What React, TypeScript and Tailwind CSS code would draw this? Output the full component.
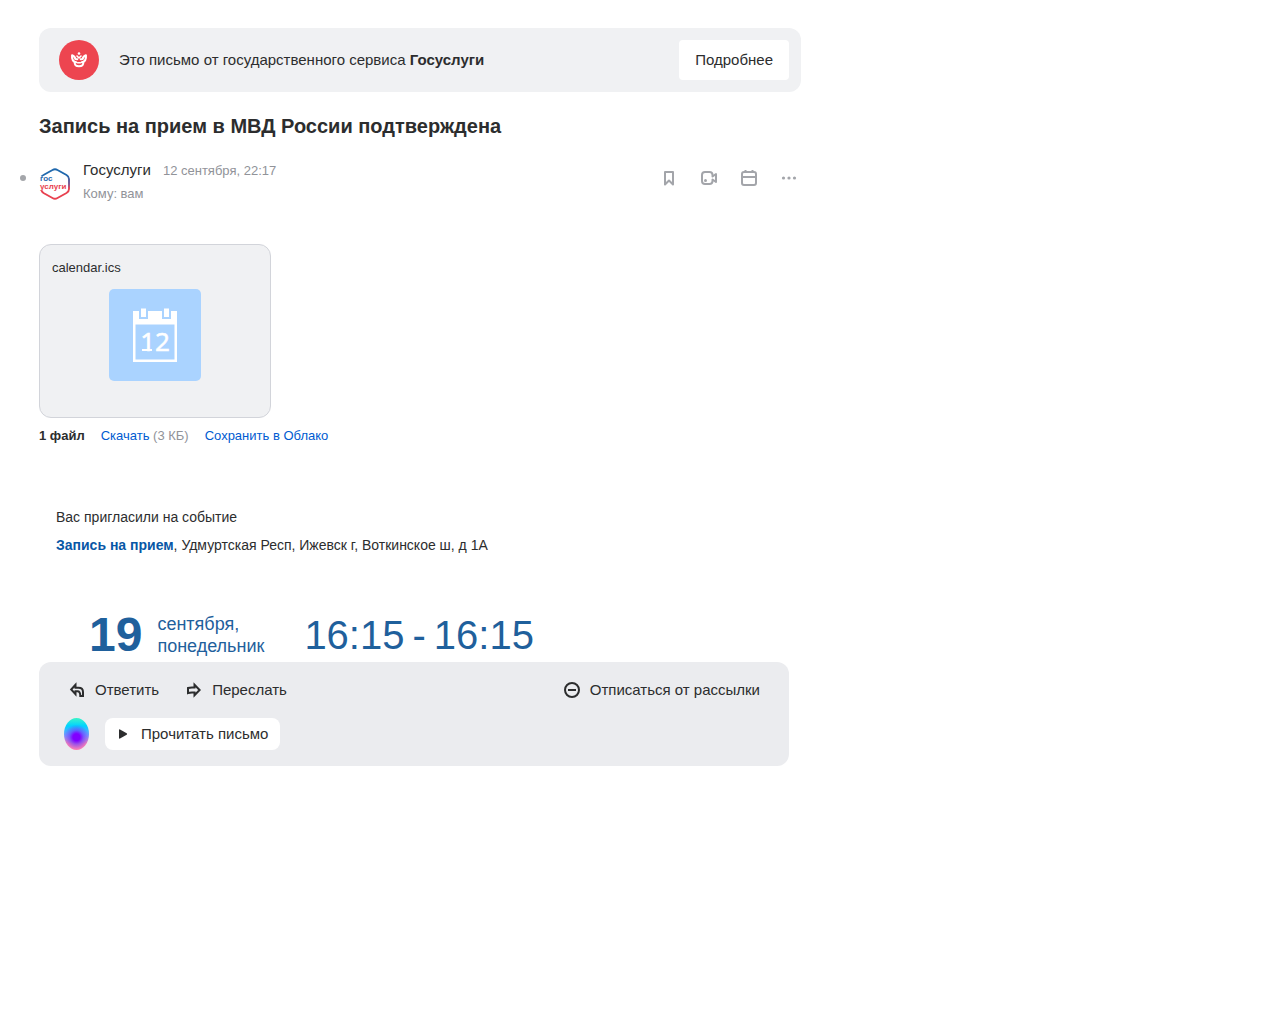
import type { ReactNode } from "react";

function GerbIcon() {
  return (
    <svg viewBox="0 0 20 20" className="size-5" fill="none" stroke="#fff" strokeWidth="2.1" strokeLinejoin="round" strokeLinecap="round" aria-hidden="true">
      <path d="M7.200 12.300C4.200 11.600 2.700 9 3.100 5.300 5 5.900 6 7 6.400 9L8.200 9.200M11.800 9.200l1.800-.2c.4-2 1.400-3.100 3.300-3.700.4 3.700-1.100 6.300-4.100 7" />
      <path d="M5.800 12.500q-.6 3.700 4.200 3.700t4.200-3.700" />
      <path d="M8 6 10 8l2-2" strokeWidth="1.600" />
      <path d="M8.500 12.800h3" strokeWidth="1.400" />
      <circle cx="10" cy="3.500" r="1.300" fill="#fff" stroke="none" />
    </svg>
  );
}

function Avatar() {
  return (
    <svg viewBox="0 0 32 32" className="size-8 shrink-0" role="img" aria-label="Госуслуги">
      <defs>
        <linearGradient id="hex" x1="0" y1="0" x2="0" y2="1">
          <stop offset="0.2" stopColor="#1f68ad" />
          <stop offset="0.5" stopColor="#7c5590" />
          <stop offset="0.65" stopColor="#e8414f" />
        </linearGradient>
      </defs>
      <path d="M2.500 8.500Q3 7.700 4.500 7L13.500 2Q16 .5 18.500 2L27.500 7Q30 8.500 30 11V21Q30 23.500 27.500 25L18.500 30Q16 31.500 13.500 30L4.500 25Q3 24 2.500 22.500" fill="none" stroke="url(#hex)" strokeWidth="1.900" />
      <text x="1" y="13" fontSize="8" fontWeight="700" fill="#1f68ad" fontFamily="Liberation Sans, sans-serif">гос</text>
      <text x="1" y="21" fontSize="8" fontWeight="700" fill="#e8414f" fontFamily="Liberation Sans, sans-serif">услуги</text>
    </svg>
  );
}

function CalendarFile() {
  return (
    <svg viewBox="0 0 92 92" className="size-[92px]" aria-hidden="true">
      <rect width="92" height="92" rx="5" fill="#aad3ff" />
      <path fill="#fff" fillRule="evenodd" d="M24 22h6v8h9v-8h14v8h9v-8h6v51H24ZM26.500 35.500v35h39v-35Z" />
      <path fill="#fff" d="M32 19.500h5V28h-5ZM55 19.500h5V28h-5Z" />
      <text x="46" y="62" fontSize="26" textAnchor="middle" fill="#fff" stroke="#fff" strokeWidth="0.5" fontFamily="Noto Sans, sans-serif">12</text>
      <path fill="#fff" d="M33 60h10v2H33Z" />
    </svg>
  );
}

function ToolButton({ label, children }: { label: string; children: ReactNode }) {
  return (
    <button type="button" aria-label={label} className="flex size-10 items-center justify-center">
      <svg viewBox="0 0 20 20" className="size-5" fill="none" stroke="#a3a5aa" strokeWidth="2" strokeLinejoin="round" aria-hidden="true">
        {children}
      </svg>
    </button>
  );
}

function ActionButton({ label, children }: { label: string; children: ReactNode }) {
  return (
    <button type="button" className="flex items-center gap-2">
      <svg viewBox="0 0 20 20" className="size-5" fill="none" stroke="#2c2d2e" strokeWidth="2" aria-hidden="true">
        {children}
      </svg>
      {label}
    </button>
  );
}

export default function App() {
  return (
    <main className="min-h-screen bg-white pt-7 pr-5 pl-[39px] font-['Liberation_Sans',Arial,sans-serif] text-[15px] leading-5 text-[#2c2d2e]">
      <div className="max-w-[762px]">
        <section className="flex items-center gap-5 rounded-xl bg-[#f0f1f3] py-3 pr-3 pl-5">
          <span className="flex size-10 shrink-0 items-center justify-center rounded-full bg-[#ed4550]">
            <GerbIcon />
          </span>
          <p className="grow">
            Это письмо от государственного сервиса <b>Госуслуги</b>
          </p>
          <button type="button" className="h-10 rounded bg-white px-4">
            Подробнее
          </button>
        </section>

        <h1 className="mt-5 text-xl leading-7 font-bold">Запись на прием в МВД России подтверждена</h1>

        <header className="relative mt-5 flex items-start">
          <span className="absolute top-[15px] -left-[19px] size-1.5 rounded-full bg-[#a4a6aa]" />
          <div className="flex grow gap-3">
            <div className="pt-2">
              <Avatar />
            </div>
            <div>
              <p className="flex items-baseline gap-3">
                <span>Госуслуги</span>
                <time className="text-[13px] text-[#919399]">12 сентября, 22:17</time>
              </p>
              <p className="mt-[3px] text-[13px] text-[#919399]">Кому: вам</p>
            </div>
          </div>
          <div className="-mt-0.5 -mr-2 flex">
            <ToolButton label="Закладка">
              <path d="M6 4h8v12.500l-4-4-4 4Z" />
            </ToolButton>
            <ToolButton label="Видеозвонок">
              <path d="M6 4h4.500q3 0 3 3v1.500L17 6v8l-3.500-2.500V13q0 3-3 3H6q-3 0-3-3V7q0-3 3-3Z" />
              <circle cx="6.500" cy="12.500" r="1.500" fill="#a3a5aa" stroke="none" />
            </ToolButton>
            <ToolButton label="Календарь">
              <rect x="3" y="4" width="14" height="13" rx="2" />
              <path d="M3 9h14M6.500 2v3M13.500 2v3" />
            </ToolButton>
            <ToolButton label="Ещё">
              <g fill="#a3a5aa" stroke="none">
                <circle cx="4.500" cy="10" r="1.600" />
                <circle cx="10" cy="10" r="1.600" />
                <circle cx="15.500" cy="10" r="1.600" />
              </g>
            </ToolButton>
          </div>
        </header>

        <section className="mt-10 text-[13px]">
          <div className="flex h-[174px] w-[232px] max-w-full flex-col rounded-xl border border-[#d2d4da] bg-[#f0f1f3] px-3 pt-[13px]">
            <span>calendar.ics</span>
            <div className="mt-[11px] flex justify-center">
              <CalendarFile />
            </div>
          </div>
          <div className="mt-2 flex flex-wrap gap-x-4">
            <b>1 файл</b>
            <span className="text-[#919399]">
              <a href="#download" className="text-[#005bd1]">Скачать</a> (3 КБ)
            </span>
            <a href="#cloud" className="text-[#005bd1]">Сохранить в Облако</a>
          </div>
        </section>

        <article className="mt-[57px] pl-[17px] text-sm leading-7">
          <p>Вас пригласили на событие</p>
          <p>
            <a href="#event" className="font-bold text-[#0857a6]">Запись на прием</a>, Удмуртская Респ, Ижевск г, Воткинское ш, д 1А
          </p>
          <div className="mt-[54px] flex items-center pl-[33px] text-[#1f609c]">
            <span className="text-5xl leading-[44px] font-bold">19</span>
            <span className="ml-[15px] text-lg leading-[22px]">
              сентября,
              <br />
              понедельник
            </span>
            <span className="ml-10 flex gap-2 text-[40px] leading-[44px]">
              <span>16:15</span>
              <span>-</span>
              <span>16:15</span>
            </span>
          </div>
        </article>

        <footer className="mt-[5px] mr-3 rounded-xl bg-[#ebecef] px-[25px] pt-[18px] pb-4">
          <div className="flex flex-wrap items-center justify-between gap-x-6 pr-1 pl-[3px]">
            <div className="flex gap-[25px]">
              <ActionButton label="Ответить">
                <path d="M8.500 4.800 4.200 9.500l4.300 4.700V11.300h2q2.800 0 2.800 4.700H16V12q0-4.200-4.500-4.200h-3Z" />
              </ActionButton>
              <ActionButton label="Переслать">
                <path d="M10.500 4.800 15.600 10l-5.100 5.200V12.500H8Q5.500 12.500 4 13V8Q5.500 7.500 8 7.500h2.500Z" />
              </ActionButton>
            </div>
            <ActionButton label="Отписаться от рассылки">
              <circle cx="10" cy="10" r="7" />
              <path d="M6 10h8" />
            </ActionButton>
          </div>
          <div className="mt-[18px] flex items-center gap-4">
            <span className="h-8 w-[25px] rounded-[50%] bg-[radial-gradient(circle_14px_at_50%_60%,#8000ff_25%,#6a3cffaa_50%,transparent_90%),linear-gradient(#3cf5c8,#00d2ff_25%,#7d96ff_55%,#ff82b4_80%)]" />
            <button type="button" className="flex h-8 items-center gap-2 rounded-lg bg-white pr-3 pl-2">
              <svg viewBox="0 0 20 20" className="size-5" fill="#2c2d2e" aria-hidden="true">
                <path d="M6 6q0-1 1-.5L13.700 9.300q.9.7 0 1.400L7 14.500q-1 .5-1-.5Z" />
              </svg>
              Прочитать письмо
            </button>
          </div>
        </footer>
      </div>
    </main>
  );
}
